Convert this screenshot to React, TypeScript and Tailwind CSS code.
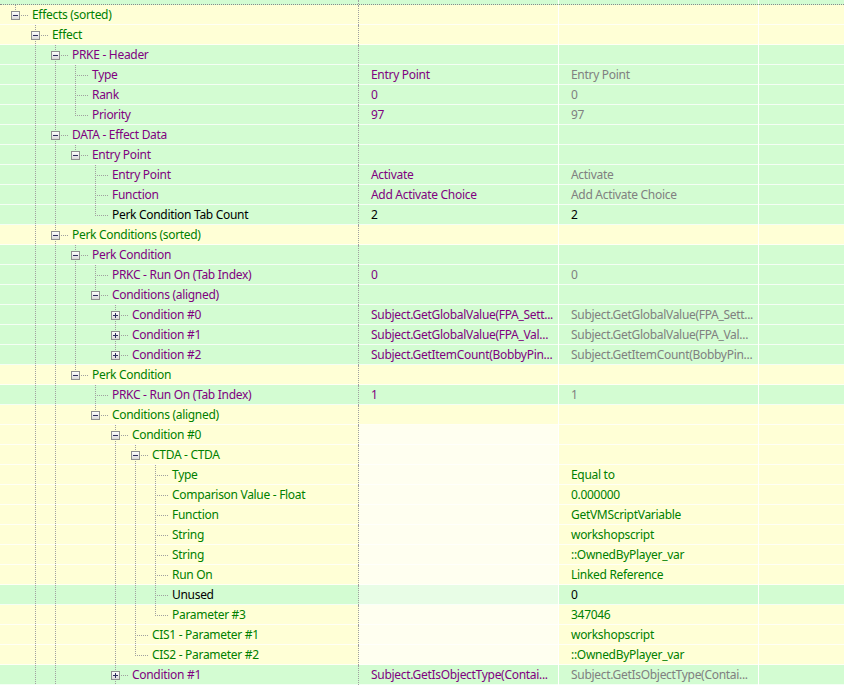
import React from "react";

type Tone = "p" | "g" | "k";
type Bg = "y" | "g";

interface Node {
  label: string;
  tone: Tone;
  bg: Bg;
  v2?: string;
  v3?: string;
  light?: boolean;
  closed?: boolean;
  more?: boolean;
  children?: Node[];
}

interface Row {
  node: Node;
  level: number;
  cont: boolean[];
  hasNext: boolean;
}

const leafP = (label: string, v2: string, v3 = v2): Node => ({ label, v2, v3, tone: "p", bg: "g" });
const leafG = (label: string, v3: string): Node => ({ label, v3, tone: "g", bg: "y", light: true });

const tree: Node = {
  label: "Effects (sorted)",
  tone: "g",
  bg: "y",
  children: [
    {
      label: "Effect",
      tone: "g",
      bg: "y",
      more: true,
      children: [
        {
          label: "PRKE - Header",
          tone: "p",
          bg: "g",
          children: [leafP("Type", "Entry Point"), leafP("Rank", "0"), leafP("Priority", "97")],
        },
        {
          label: "DATA - Effect Data",
          tone: "p",
          bg: "g",
          children: [
            {
              label: "Entry Point",
              tone: "p",
              bg: "g",
              children: [
                leafP("Entry Point", "Activate"),
                leafP("Function", "Add Activate Choice"),
                { label: "Perk Condition Tab Count", v2: "2", v3: "2", tone: "k", bg: "g" },
              ],
            },
          ],
        },
        {
          label: "Perk Conditions (sorted)",
          tone: "g",
          bg: "y",
          more: true,
          children: [
            {
              label: "Perk Condition",
              tone: "p",
              bg: "g",
              children: [
                leafP("PRKC - Run On (Tab Index)", "0"),
                {
                  label: "Conditions (aligned)",
                  tone: "p",
                  bg: "g",
                  children: [
                    { ...leafP("Condition #0", "Subject.GetGlobalValue(FPA_Sett..."), closed: true },
                    { ...leafP("Condition #1", "Subject.GetGlobalValue(FPA_Val..."), closed: true },
                    { ...leafP("Condition #2", "Subject.GetItemCount(BobbyPin..."), closed: true },
                  ],
                },
              ],
            },
            {
              label: "Perk Condition",
              tone: "g",
              bg: "y",
              children: [
                leafP("PRKC - Run On (Tab Index)", "1"),
                {
                  label: "Conditions (aligned)",
                  tone: "g",
                  bg: "y",
                  children: [
                    {
                      label: "Condition #0",
                      tone: "g",
                      bg: "y",
                      light: true,
                      children: [
                        {
                          label: "CTDA - CTDA",
                          tone: "g",
                          bg: "y",
                          light: true,
                          children: [
                            leafG("Type", "Equal to"),
                            leafG("Comparison Value - Float", "0.000000"),
                            leafG("Function", "GetVMScriptVariable"),
                            leafG("String", "workshopscript"),
                            leafG("String", "::OwnedByPlayer_var"),
                            leafG("Run On", "Linked Reference"),
                            { label: "Unused", v3: "0", tone: "k", bg: "g", light: true },
                            leafG("Parameter #3", "347046"),
                          ],
                        },
                        leafG("CIS1 - Parameter #1", "workshopscript"),
                        leafG("CIS2 - Parameter #2", "::OwnedByPlayer_var"),
                      ],
                    },
                    {
                      ...leafP("Condition #1", "Subject.GetIsObjectType(Contai..."),
                      closed: true,
                      more: true,
                    },
                  ],
                },
              ],
            },
          ],
        },
      ],
    },
  ],
};

function flatten(node: Node, level: number, cont: boolean[], hasNext: boolean, out: Row[]) {
  out.push({ node, level, cont, hasNext });
  const kids = node.children ?? [];
  kids.forEach((c, i) => flatten(c, level + 1, [...cont, hasNext], i < kids.length - 1 || !!c.more, out));
  return out;
}

const rows = flatten(tree, 0, [], false, []);

const labelColor: Record<Tone, string> = { p: "text-[#800080]", g: "text-[#008000]", k: "text-black" };
const v3Color: Record<Tone, string> = { p: "text-[#808080]", g: "text-[#008000]", k: "text-black" };
const bgColor: Record<Bg, string> = { y: "bg-[#ffffd6]", g: "bg-[#d3fcd2]" };
const lightBg: Record<Bg, string> = { y: "bg-[#fffff0]", g: "bg-[#e8fde6]" };

const LINE = "#a0a0a0";

function Connectors({ row }: { row: Row }) {
  const { level, cont, hasNext, node } = row;
  const w = 32 + 20 * level;
  const x = 15.5 + 20 * level;
  const expandable = !!node.children || node.closed;
  return (
    <svg width={w} height={20} className="shrink-0" shapeRendering="crispEdges">
      <defs>
        <linearGradient id="box" x1="0" y1="0" x2="0" y2="1">
          <stop offset="0" stopColor="#ffffff" />
          <stop offset="1" stopColor="#d8d8d8" />
        </linearGradient>
      </defs>
      {cont.map((c, a) =>
        c ? <line key={a} x1={15.5 + 20 * a} y1={0} x2={15.5 + 20 * a} y2={20} stroke={LINE} strokeDasharray="1 1" /> : null
      )}
      <line x1={x} y1={0} x2={x} y2={hasNext ? 20 : 11} stroke={LINE} strokeDasharray="1 1" />
      <line x1={x + 1} y1={10.5} x2={28 + 20 * level} y2={10.5} stroke={LINE} strokeDasharray="1 1" />
      {expandable && (
        <g>
          <rect x={x - 4} y={6.5} width={8} height={8} fill="url(#box)" stroke="#8e8f8f" />
          <rect x={x - 2.5} y={10} width={5} height={1} fill="#2c2c5c" />
          {node.closed && <rect x={x - 0.5} y={8} width={1} height={5} fill="#2c2c5c" />}
        </g>
      )}
    </svg>
  );
}

const sep = "shadow-[inset_0_-1px_0_rgba(255,255,255,0.75)]";

export default function App() {
  return (
    <div className="w-[844px] h-[685px] overflow-hidden bg-white font-['Segoe_UI','Noto_Sans',sans-serif] text-[12px] tracking-[-0.3px]">
      <div className="flex h-[5px] border-b border-dotted border-[#8a8a8a] bg-[#d3fcd2]">
        <div className="w-[359px] border-r border-dotted border-[#a0a0a0]" />
        <div className="w-[200px] border-r border-white" />
        <div className="w-[200px] border-r border-white" />
      </div>
      {rows.map((row, i) => {
        const n = row.node;
        return (
          <div key={i} className={`flex h-5 ${bgColor[n.bg]}`}>
            <div className={`flex w-[359px] shrink-0 items-center border-r border-dotted border-[#a0a0a0] ${sep}`}>
              <Connectors row={row} />
              <span className={`whitespace-nowrap leading-5 ${labelColor[n.tone]}`}>{n.label}</span>
            </div>
            <div
              className={`flex w-[200px] shrink-0 items-center overflow-hidden whitespace-nowrap border-r border-white pl-3 ${sep} ${
                n.light ? lightBg[n.bg] : ""
              } ${labelColor[n.tone]}`}
            >
              {n.v2}
            </div>
            <div
              className={`flex w-[200px] shrink-0 items-center overflow-hidden whitespace-nowrap border-r border-white pl-3 ${sep} ${v3Color[n.tone]}`}
            >
              {n.v3}
            </div>
            <div className={`flex-1 ${sep}`} />
          </div>
        );
      })}
    </div>
  );
}
